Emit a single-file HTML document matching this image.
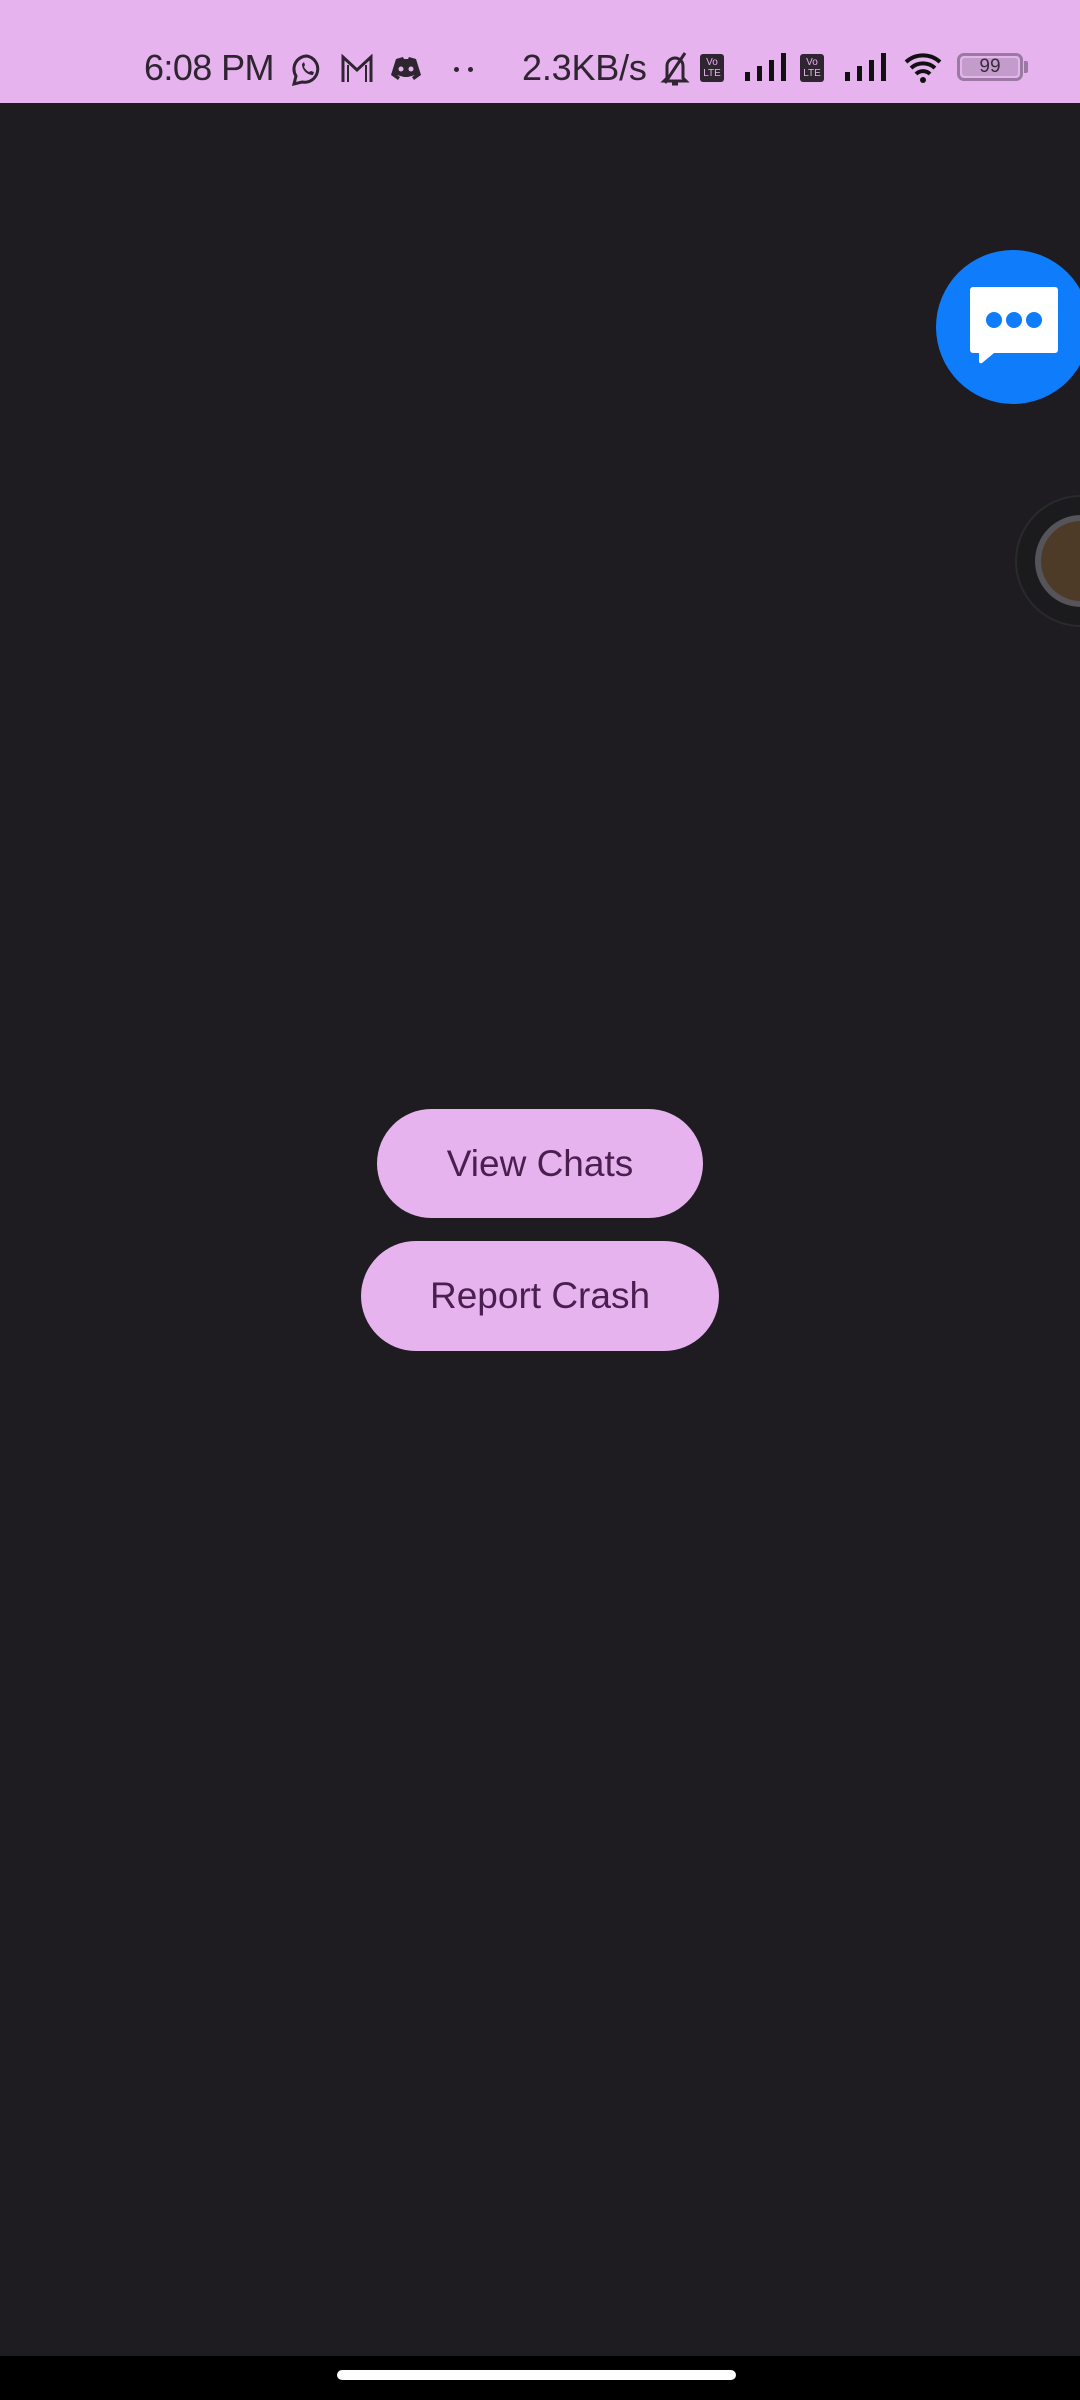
<!DOCTYPE html>
<html><head><meta charset="utf-8"><style>
*{margin:0;padding:0;box-sizing:border-box}
body{width:1080px;height:2400px;background:#1e1c20;position:relative;overflow:hidden;font-family:"Liberation Sans",sans-serif}
.sb{position:absolute;left:0;top:0;width:1080px;height:103px;background:#e6b3ee;color:#2e2530}
.t{position:absolute;top:48px;font-size:36px;letter-spacing:-0.6px;line-height:40px}
.btn{position:absolute;background:#e6b3ee;border-radius:60px;color:#4a1f50;font-size:37px;font-weight:500;display:flex;align-items:center;justify-content:center}
.nav{position:absolute;left:0;top:2356px;width:1080px;height:44px;background:#000}
</style></head><body>
<div class="sb">
 <div class="t" style="left:144px">6:08 PM</div>
 <svg style="position:absolute;left:289px;top:52px" width="36" height="36" viewBox="0 0 36 36"><path d="M18 4a13 13 0 0 0-11 20l-2 8 8-2A13 13 0 1 0 18 4z" fill="none" stroke="#2e2530" stroke-width="3"/><path d="M13 12c0 6 5 11 11 11l1-3-3-1-2 1c-2-1-4-3-5-5l1-2-1-3z" fill="#2e2530"/></svg>
 <svg style="position:absolute;left:340px;top:54px" width="34" height="30" viewBox="0 0 34 30"><path d="M3 28V3l14 13L31 3v25" fill="none" stroke="#2e2530" stroke-width="3"/><path d="M8 28V11M26 28V11" stroke="#2e2530" stroke-width="2"/></svg>
 <svg style="position:absolute;left:390px;top:56px" width="32" height="26" viewBox="0 0 32 26"><path d="M6 3l7-2 1 2h4l1-2 7 2 5 16-7 5-2-3 3-2-7 2H14l-7-2 3 2-2 3-7-5z" fill="#2e2530"/><circle cx="11" cy="13" r="2.5" fill="#e6b3ee"/><circle cx="21" cy="13" r="2.5" fill="#e6b3ee"/></svg>
 <div style="position:absolute;left:454px;top:67px;width:5px;height:5px;border-radius:50%;background:#2e2530"></div>
 <div style="position:absolute;left:468px;top:67px;width:5px;height:5px;border-radius:50%;background:#2e2530"></div>
 <div class="t" style="left:522px;letter-spacing:-0.2px">2.3KB/s</div>
 <svg style="position:absolute;left:657px;top:50px" width="36" height="38" viewBox="0 0 36 38"><path d="M10 28V16a8 8 0 0 1 16 0v12l3 3H7z" fill="none" stroke="#2e2530" stroke-width="3"/><path d="M15 34h6M28 3L8 33" stroke="#2e2530" stroke-width="3"/></svg>
 <div style="position:absolute;left:700px;top:54px;width:24px;height:28px;background:#2e2530;border-radius:3px;color:#e6b3ee;font-size:10px;line-height:11px;text-align:center;padding-top:3px">Vo<br>LTE</div>
 <svg style="position:absolute;left:743px;top:52px" width="50" height="30" viewBox="0 0 50 30"><rect x="2" y="20" width="5" height="9" fill="#111"/><rect x="14" y="14" width="5" height="15" fill="#111"/><rect x="26" y="8" width="5" height="21" fill="#111"/><rect x="38" y="1" width="5" height="28" fill="#111"/></svg>
 <div style="position:absolute;left:800px;top:54px;width:24px;height:28px;background:#2e2530;border-radius:3px;color:#e6b3ee;font-size:10px;line-height:11px;text-align:center;padding-top:3px">Vo<br>LTE</div>
 <svg style="position:absolute;left:843px;top:52px" width="50" height="30" viewBox="0 0 50 30"><rect x="2" y="20" width="5" height="9" fill="#111"/><rect x="14" y="14" width="5" height="15" fill="#111"/><rect x="26" y="8" width="5" height="21" fill="#111"/><rect x="38" y="1" width="5" height="28" fill="#111"/></svg>
 <svg style="position:absolute;left:904px;top:52px" width="38" height="32" viewBox="0 0 38 32"><path d="M2 10a25 25 0 0 1 34 0M7 16a18 18 0 0 1 24 0M12 22a10 10 0 0 1 14 0" fill="none" stroke="#111" stroke-width="4"/><circle cx="19" cy="28" r="3" fill="#111"/></svg>
 <div style="position:absolute;left:957px;top:53px;width:66px;height:28px;border:3px solid #9a7aa0;border-radius:7px;padding:2px"><div style="width:100%;height:100%;background:#c39ccb;border-radius:3px;font-size:19px;line-height:18px;text-align:center;color:#3a2a3e">99</div></div>
 <div style="position:absolute;left:1024px;top:61px;width:4px;height:12px;background:#9a7aa0;border-radius:0 2px 2px 0"></div>
</div>
<div style="position:absolute;left:936px;top:250px;width:154px;height:154px;border-radius:50%;background:#0f7dfb"></div>
<svg style="position:absolute;left:970px;top:287px" width="88" height="80" viewBox="0 0 88 80"><path d="M3 0h82a3 3 0 0 1 3 3v60a3 3 0 0 1-3 3H24L12 76a2 2 0 0 1-3-2v-8H3a3 3 0 0 1-3-3V3a3 3 0 0 1 3-3z" fill="#fff"/><circle cx="24" cy="33" r="8" fill="#0f7dfb"/><circle cx="44" cy="33" r="8" fill="#0f7dfb"/><circle cx="64" cy="33" r="8" fill="#0f7dfb"/></svg>
<div style="position:absolute;left:1015px;top:495px;width:132px;height:132px;border-radius:50%;background:#1b1a1d;border:2px solid #2a292c"></div>
<div style="position:absolute;left:1035px;top:515px;width:92px;height:92px;border-radius:50%;background:#4d3b28;border:6px solid #55545a"></div>
<div class="btn" style="left:377px;top:1109px;width:326px;height:109px">View Chats</div>
<div class="btn" style="left:361px;top:1241px;width:358px;height:110px">Report Crash</div>
<div class="nav"></div>
<div style="position:absolute;left:337px;top:2370px;width:399px;height:10px;border-radius:5px;background:#fff"></div>
</body></html>
